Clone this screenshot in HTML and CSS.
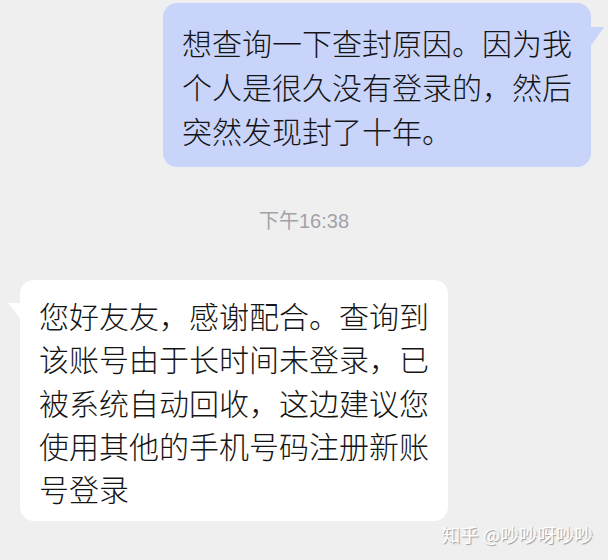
FILE: index.html
```html
<!DOCTYPE html>
<html lang="zh-CN">
<head>
    <meta charset="UTF-8">
    <meta name="viewport" content="width=device-width, initial-scale=1.0">
    <title>聊天记录</title>
    <link rel="stylesheet" href="styles.css">
</head>
<body>

    <div class="chat">
        <!-- 我发出的消息 -->
        <div class="row row-out">
            <div class="bubble bubble-out">想查询一下查封原因。因为我个人是很久没有登录的，然后突然发现封了十年。</div>
        </div>

        <div class="time">下午16:38</div>

        <!-- 客服回复 -->
        <div class="row row-in">
            <div class="bubble bubble-in">您好友友，感谢配合。查询到该账号由于长时间未登录，已被系统自动回收，这边建议您使用其他的手机号码注册新账号登录</div>
        </div>
    </div>

    <div class="watermark">知乎 @吵吵呀吵吵</div>

</body>
</html>
```

FILE: styles.css
```css
/* 页面 */
body {
    margin: 0;
    background-color: #efeff0;
    font-family: "Noto Sans CJK SC", "Noto Sans", sans-serif;
    color: #141414;
}

.chat {
    display: flex;
    flex-direction: column;
    padding-top: 3px;
}

.row {
    display: flex;
}

.row-out {
    justify-content: flex-end;
    padding-right: 17px;
}

.row-in {
    justify-content: flex-start;
    padding-left: 20px;
    margin-top: 47px;
}

/* 气泡 */
.bubble {
    position: relative;
    width: 390px;
    padding: 17px 19px 15px 19px;
    border-radius: 14px;
    font-size: 30px;
    font-weight: 300;
    line-height: 44px;
}

.bubble-out {
    background-color: #c9d4fb;
}

.bubble-in {
    background-color: #ffffff;
    padding-top: 14px;
    padding-bottom: 11px;
    line-height: 43.3px;
}

/* 小尾巴 */
.bubble-out::after {
    content: "";
    position: absolute;
    right: -13px;
    top: 24px;
    border-left: 14px solid #c9d4fb;
    border-bottom: 20px solid transparent;
}

.bubble-in::before {
    content: "";
    position: absolute;
    left: -12px;
    top: 23px;
    border-right: 12px solid #ffffff;
    border-bottom: 15px solid transparent;
}

/* 时间 */
.time {
    margin-top: 42px;
    text-align: center;
    font-family: "Liberation Sans", "Noto Sans CJK SC", sans-serif;
    font-size: 20px;
    line-height: 24px;
    color: #a2a2aa;
}

/* 水印 */
.watermark {
    position: absolute;
    right: 15px;
    top: 522px;
    font-size: 18.5px;
    line-height: 24px;
    color: #ffffff;
    text-shadow: 1px 1px 1px #9a9a9a;
}
```
